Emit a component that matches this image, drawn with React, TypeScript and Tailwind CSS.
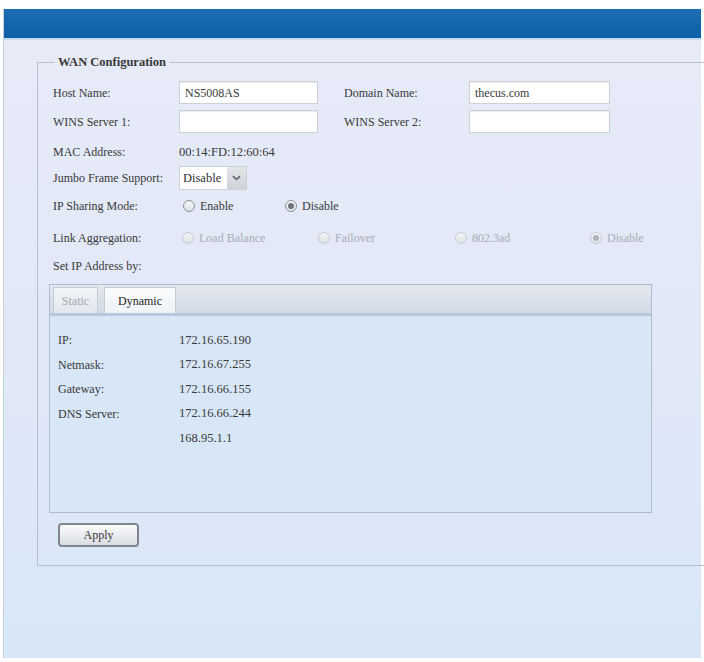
import React from "react";

type TRadioParam = {
  label: string;
  checked?: boolean;
  disabled?: boolean;
};

const Radio: React.FC<TRadioParam> = ({ label, checked, disabled }) => {
  return (
    <span className="flex items-center gap-[5px]">
      <span
        className={`w-[12px] h-[12px] rounded-full border flex items-center justify-center bg-gradient-to-b from-[#f4f5f7] to-[#dfe2e6] ${
          disabled ? "border-[#c4c9cf]" : "border-[#8c9197]"
        }`}
      >
        {checked && (
          <span
            className={`w-[6px] h-[6px] rounded-full ${
              disabled ? "bg-[#aeb3b9]" : "bg-[#6f747a]"
            }`}
          />
        )}
      </span>
      <span className={disabled ? "text-[#a7acb3]" : "text-[#3a3a3a]"}>
        {label}
      </span>
    </span>
  );
};

const TextBox: React.FC<{ value?: string; w: string }> = ({ value, w }) => (
  <div
    className={`${w} h-[23px] bg-white border border-[#cdd1d6] shadow-[inset_0_1px_1px_rgba(0,0,0,0.08)] px-[5px] flex items-center text-[#3a3a3a]`}
  >
    {value}
  </div>
);

const dynamicRows: [string, string][] = [
  ["IP:", "172.16.65.190"],
  ["Netmask:", "172.16.67.255"],
  ["Gateway:", "172.16.66.155"],
  ["DNS Server:", "172.16.66.244"],
  ["", "168.95.1.1"],
];

export default function App() {
  return (
    <div className="w-[704px] h-[662px] bg-white pt-[9px] pl-[3px] pr-[3px] pb-[4px] font-['Liberation_Serif',serif] text-[12px] text-[#383838]">
      <div className="h-full border-l border-[#c6ced8] flex flex-col">
        {/* top bar */}
        <div className="h-[29px] bg-gradient-to-b from-[#1d6eb2] to-[#0b5fa5]" />
        <div className="h-[2px] bg-[#c3d9ee]" />

        <div className="flex-1 bg-gradient-to-b from-[#e7ebf8] via-[#e2e8f8] to-[#d7e7f7] pl-[33px] pt-[14px]">
          <fieldset className="border border-r-0 border-[#b7c0cc] pb-[18px] -mr-[4px]">
            <legend className="ml-[16px] px-[4px] text-[12.5px] font-bold text-[#383838] leading-[16px]">
              WAN Configuration
            </legend>

            <div className="pl-[11px] pt-[11px] flex flex-col">
              {/* host / domain */}
              <div className="h-[23px] flex items-center pl-[4px]">
                <span className="w-[126px]">Host Name:</span>
                <TextBox value="NS5008AS" w="w-[139px]" />
                <span className="w-[125px] pl-[26px] box-content">Domain Name:</span>
                <TextBox value="thecus.com" w="w-[141px]" />
              </div>
              <div className="h-[23px] mt-[6px] flex items-center pl-[4px]">
                <span className="w-[126px]">WINS Server 1:</span>
                <TextBox w="w-[139px]" />
                <span className="w-[125px] pl-[26px] box-content">WINS Server 2:</span>
                <TextBox w="w-[141px]" />
              </div>

              <div className="h-[22px] mt-[8px] flex items-center pl-[4px]">
                <span className="w-[126px]">MAC Address:</span>
                <span className="text-[12.5px]">00:14:FD:12:60:64</span>
              </div>

              <div className="h-[24px] mt-[3px] flex items-center pl-[4px]">
                <span className="w-[126px]">Jumbo Frame Support:</span>
                <div className="h-[24px] flex border border-[#cdd1d6] bg-white">
                  <span className="w-[47px] flex items-center pl-[3px] text-[#2f2f2f] text-[12.5px]">
                    Disable
                  </span>
                  <span className="w-[19px] bg-gradient-to-b from-[#e3e5e8] to-[#cfd3d8] flex items-center justify-center">
                    <svg width="9" height="6" viewBox="0 0 9 6">
                      <path
                        d="M1 1.2 L4.5 4.5 L8 1.2"
                        fill="none"
                        stroke="#5d636a"
                        strokeWidth="1.6"
                      />
                    </svg>
                  </span>
                </div>
              </div>

              <div className="h-[20px] mt-[6px] flex items-center pl-[4px]">
                <span className="w-[126px]">IP Sharing Mode:</span>
                <div className="w-[106px] pl-[4px]">
                  <Radio label="Enable" />
                </div>
                <Radio label="Disable" checked />
              </div>

              <div className="h-[20px] mt-[12px] flex items-center pl-[4px]">
                <span className="w-[126px]">Link Aggregation:</span>
                <div className="grid grid-cols-[136px_137px_135px_auto] pl-[3px]">
                  <Radio label="Load Balance" disabled />
                  <Radio label="Failover" disabled />
                  <Radio label="802.3ad" disabled />
                  <Radio label="Disable" checked disabled />
                </div>
              </div>

              <div className="h-[20px] mt-[8px] flex items-center pl-[4px]">
                <span>Set IP Address by:</span>
              </div>

              {/* address tabs */}
              <div className="mt-[8px] w-[603px] h-[229px] border border-[#aebccb] flex flex-col bg-[#d8e7f7]">
                <div className="h-[31px] bg-gradient-to-b from-[#e4e9ef] to-[#d0dae6] border-b-[3px] border-[#b9c8d8] flex items-end pl-[3px] gap-[6px]">
                  <div className="w-[45px] h-[26px] bg-gradient-to-b from-[#f3f5f8] to-[#e2e7ed] border border-b-0 border-[#c4ccd6] flex items-center justify-center text-[#a2a7ae]">
                    Static
                  </div>
                  <div className="w-[72px] h-[26px] bg-gradient-to-b from-[#fbfcfd] to-[#eef2f6] border border-b-0 border-[#c4ccd6] flex items-center justify-center text-[#262626]">
                    Dynamic
                  </div>
                </div>
                <div className="pt-[12px] pl-[8px] flex flex-col">
                  {dynamicRows.map(([label, value], i) => (
                    <div key={i} className="h-[24.5px] flex items-center">
                      <span className="w-[121px]">{label}</span>
                      <span className="text-[12.5px]">{value}</span>
                    </div>
                  ))}
                </div>
              </div>

              <div className="mt-[10px] pl-[9px]">
                <button
                  type="button"
                  className="w-[81px] h-[24px] rounded-[4px] border-2 border-[#7f868f] bg-gradient-to-b from-[#fbfbfc] to-[#d9dde2] text-[#383838] text-[12px] font-['Liberation_Serif',serif]"
                >
                  Apply
                </button>
              </div>
            </div>
          </fieldset>
        </div>
      </div>
    </div>
  );
}
